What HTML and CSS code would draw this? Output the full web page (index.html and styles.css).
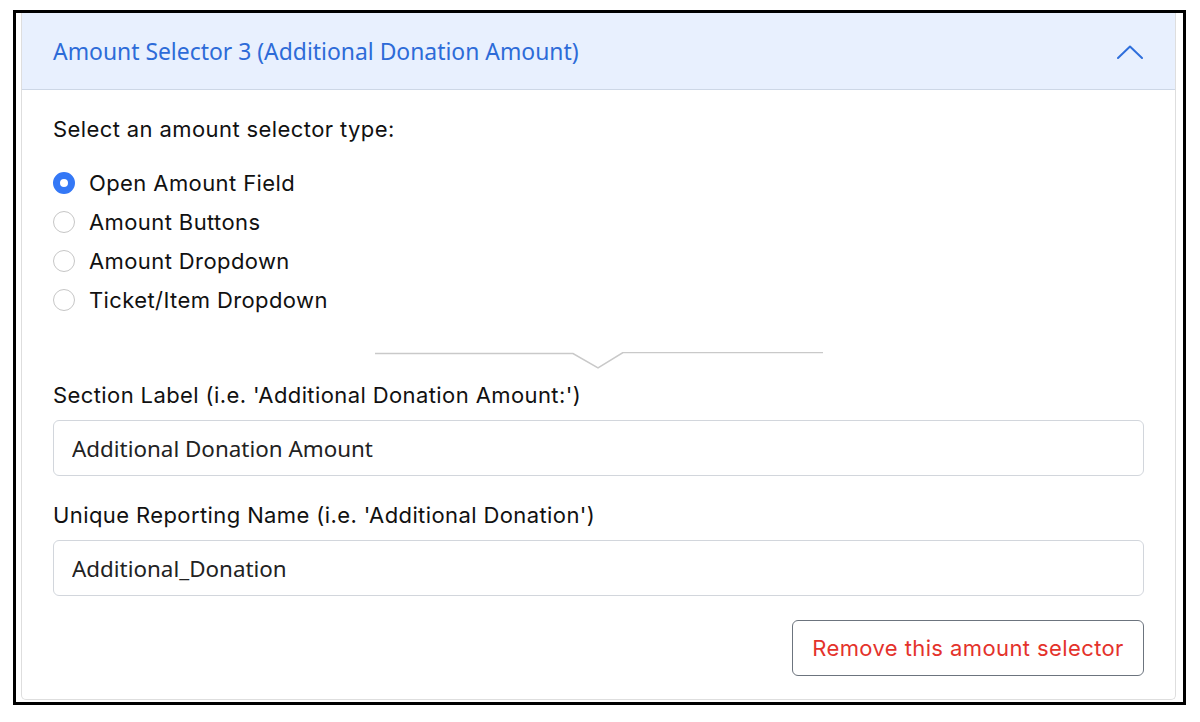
FILE: index.html
```html
<!DOCTYPE html>
<html lang="en">
<head>
    <meta charset="UTF-8" />
    <meta name="viewport" content="width=device-width, initial-scale=1.0"/>
    <title>Amount Selector</title>
    <link rel="stylesheet" href="styles.css">
</head>
<body>
<div class="frame">
    <div class="card">
        <div class="card-header">
            <span class="card-title">Amount Selector 3 (Additional Donation Amount)</span>
            <svg class="chevron" width="26" height="14" viewBox="0 0 26 14">
                <polyline points="1,13 13,1.5 25,13" fill="none" stroke="#2f6fdc" stroke-width="2" stroke-linecap="round" stroke-linejoin="round"/>
            </svg>
        </div>
        <div class="card-body">
            <p class="field-label">Select an amount selector type:</p>
            <div class="radio-list">
                <label class="radio-row"><input type="radio" name="type" checked> Open Amount Field</label>
                <label class="radio-row"><input type="radio" name="type"> Amount Buttons</label>
                <label class="radio-row"><input type="radio" name="type"> Amount Dropdown</label>
                <label class="radio-row"><input type="radio" name="type"> Ticket/Item Dropdown</label>
            </div>

            <svg class="divider" width="448" height="18" viewBox="0 0 448 18">
                <polyline points="0,1.5 198,1.5 223,16 248,0.5 448,0.5" fill="none" stroke="#c9c9c9" stroke-width="1.5"/>
            </svg>

            <div class="form-group">
                <label class="field-label" for="sectionLabel">Section Label (i.e. 'Additional Donation Amount:')</label>
                <input id="sectionLabel" class="text-input" type="text" value="Additional Donation Amount">
            </div>
            <div class="form-group">
                <label class="field-label" for="reportName">Unique Reporting Name (i.e. 'Additional Donation')</label>
                <input id="reportName" class="text-input" type="text" value="Additional_Donation">
            </div>
            <div class="actions">
                <button class="remove-btn">Remove this amount selector</button>
            </div>
        </div>
    </div>
</div>
</body>
</html>
```

FILE: styles.css
```css
* {
    margin: 0;
    padding: 0;
    box-sizing: border-box;
}

body {
    background-color: #fff;
    color: #111;
    font-family: Inter, "Liberation Sans", Arial, sans-serif;
}

.frame {
    width: 1173px;
    height: 695px;
    margin: 10px 0 0 13px;
    border: 3px solid #000;
    padding: 0 7px 2px 5px;
    display: flex;
}

.card {
    flex: 1;
    border: 1px solid #dedede;
    border-top: none;
    border-radius: 0 0 5px 5px;
    overflow: hidden;
}

.card-header {
    height: 77px;
    background-color: #e8f0fe;
    border-bottom: 1px solid #cdd7e6;
    display: flex;
    align-items: center;
    justify-content: space-between;
    padding: 0 32px 0 31px;
}

.card-title {
    font-family: "Noto Sans", "Open Sans", sans-serif;
    font-size: 22.9px;
    color: #2d6bd8;
    margin-top: 1px;
}

.chevron {
    margin-top: 1px;
}

.card-body {
    padding: 24px 31px 0 31px;
}

.field-label {
    display: block;
    font-size: 22px;
    letter-spacing: 0.4px;
    line-height: 30px;
    color: #111;
}

.radio-list {
    margin-top: 19px;
}

.radio-row {
    display: flex;
    align-items: center;
    gap: 14px;
    height: 39px;
    font-size: 22px;
    letter-spacing: 0.4px;
    color: #111;
}

.radio-row input {
    appearance: none;
    -webkit-appearance: none;
    width: 22px;
    height: 22px;
    border: 1.5px solid #c6c6c6;
    border-radius: 50%;
    background: #fff;
    flex-shrink: 0;
}

.radio-row input:checked {
    border: 7px solid #3478f6;
}

.divider {
    display: block;
    margin: 33px auto 0;
}

.form-group {
    margin-top: 10px;
}

.form-group + .form-group {
    margin-top: 24px;
}

.text-input {
    display: block;
    width: 100%;
    height: 56px;
    margin-top: 10px;
    padding: 0 18px;
    border: 1px solid #d2d6dc;
    border-radius: 6px;
    font-family: "Noto Sans", "Open Sans", sans-serif;
    font-size: 22.4px;
    color: #222;
    background: #fff;
}

.actions {
    display: flex;
    justify-content: flex-end;
    margin-top: 24px;
}

.remove-btn {
    width: 352px;
    height: 56px;
    border: 1px solid #6c747e;
    border-radius: 6px;
    background: #fff;
    color: #e4322b;
    font-family: Inter, "Liberation Sans", Arial, sans-serif;
    font-size: 22px;
    letter-spacing: 0.4px;
}
```
